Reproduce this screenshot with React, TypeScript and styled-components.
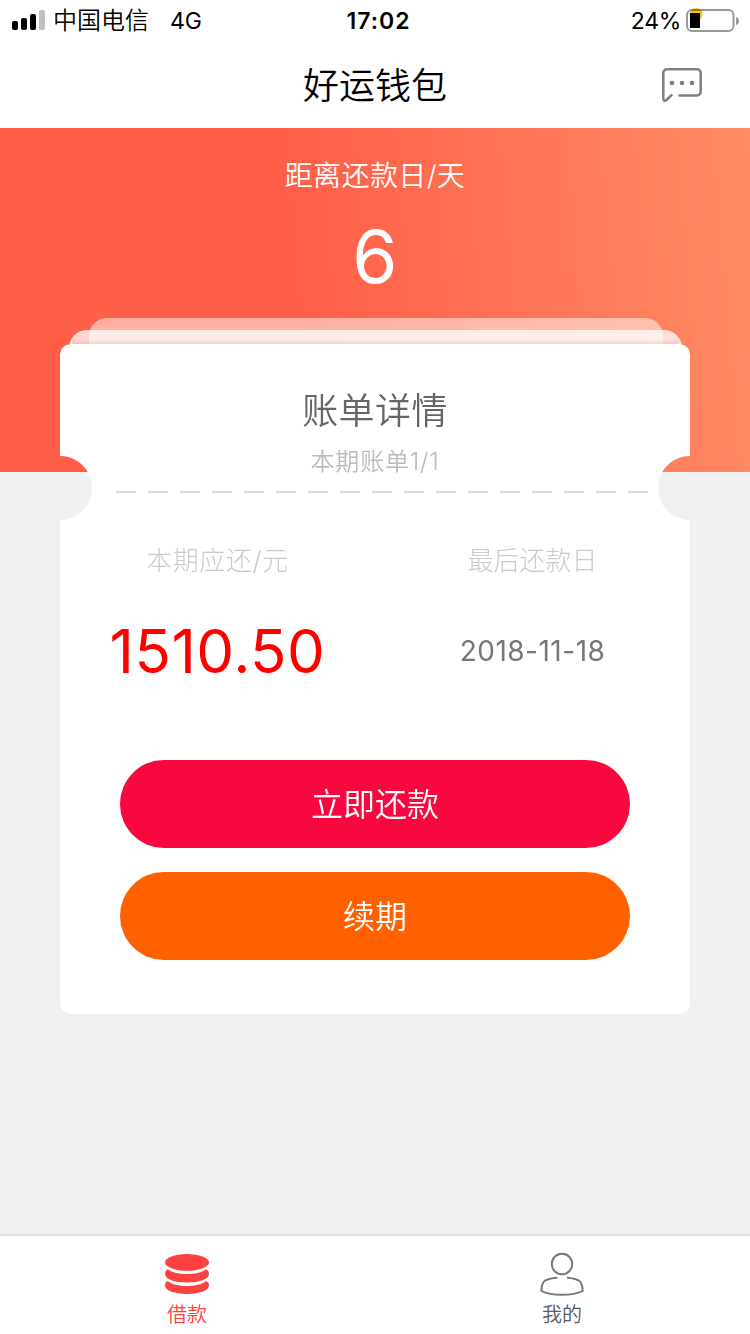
import React from "react";
import styled, { createGlobalStyle } from "styled-components";

const GlobalStyle = createGlobalStyle`
  * { box-sizing: border-box; }
  body {
    margin: 0;
    background: #f0f0f0;
    font-family: Inter, "Noto Sans CJK SC", sans-serif;
    -webkit-font-smoothing: antialiased;
  }
`;

const Screen = styled.div`
  display: flex;
  flex-direction: column;
  width: 750px;
  height: 1334px;
  overflow: hidden;
  background: #f0f0f0;
`;

const StatusBar = styled.header`
  display: grid;
  grid-template-columns: 1fr auto 1fr;
  grid-template-rows: 40px;
  align-items: center;
  height: 40px;
  padding: 0 10px 0 12px;
  background: #fff;
  color: #000;
  font-size: 24px;
  line-height: 36px;
  white-space: nowrap;
`;

const StatusGroup = styled.div<{ $end?: boolean }>`
  display: flex;
  align-items: center;
  justify-content: ${(p) => (p.$end ? "flex-end" : "flex-start")};
  gap: ${(p) => (p.$end ? 5 : 7)}px;
  height: 40px;
`;

const Carrier = styled.span`
  padding-top: 2px;
  font-weight: 350;
`;

const Network = styled.span`
  margin-left: 14px;
  padding-top: 2px;
  font-size: 23px;
`;

const Percent = styled.span`
  padding-top: 2px;
  font-size: 23px;
  letter-spacing: -0.3px;
`;

const Clock = styled.div`
  padding: 2px 0 0 5px;
  font-size: 23px;
  font-weight: 600;
  letter-spacing: 1px;
`;

const NavBar = styled.nav`
  display: grid;
  grid-template-columns: 1fr auto 1fr;
  align-items: center;
  height: 88px;
  padding: 3px 48px 0;
  background: #fff;
`;

const Title = styled.h1`
  grid-column: 2;
  margin: 0;
  padding-top: 2px;
  font-size: 36px;
  font-weight: 350;
  line-height: 83px;
  color: #000;
`;

const MessageButton = styled.button`
  justify-self: end;
  display: flex;
  padding: 0;
  border: 0;
  background: none;
`;

const Hero = styled.section`
  display: flex;
  flex-direction: column;
  align-items: center;
  height: 344px;
  padding-top: 26px;
  background: linear-gradient(85deg, #ff5f48 0%, #ff5f48 40%, #ff8c64 100%);
  color: #fff;
`;

const HeroLabel = styled.div`
  font-size: 28px;
  font-weight: 350;
  line-height: 44px;
  letter-spacing: 0.4px;
`;

const HeroDays = styled.div`
  margin-top: 15px;
  font-size: 73px;
  line-height: 88px;
`;

const Bill = styled.main`
  position: relative;
  z-index: 1;
  flex: 1;
  margin: -154px 60px 0;
`;

const Stack = styled.div`
  position: relative;
  height: 26px;
  overflow: hidden;
  &::after {
    content: "";
    position: absolute;
    left: 12px;
    right: 12px;
    bottom: 0;
    height: 5px;
    background: linear-gradient(rgba(120, 60, 50, 0), rgba(120, 60, 50, 0.12));
  }
`;

const Sheet = styled.div<{ $left: number; $right: number; $top: number; $alpha: number }>`
  position: absolute;
  left: ${(p) => p.$left}px;
  right: ${(p) => p.$right}px;
  top: ${(p) => p.$top}px;
  height: 60px;
  border-radius: 18px;
  background: rgba(255, 255, 255, ${(p) => p.$alpha});
`;

const Card = styled.article`
  height: 670px;
  padding-top: 41px;
  border-radius: 10px;
  background: #fff;
  mask-image: radial-gradient(circle at 0 144px, transparent 31.5px, #000 32.5px),
    radial-gradient(circle at 100% 144px, transparent 31.5px, #000 32.5px);
  mask-composite: intersect;
`;

const CardTitle = styled.h2`
  margin: 0;
  font-size: 36px;
  font-weight: 350;
  line-height: 52px;
  letter-spacing: 0.4px;
  text-align: center;
  color: #666;
`;

const CardSubtitle = styled.div`
  margin-top: 7px;
  font-size: 24px;
  font-weight: 350;
  line-height: 36px;
  letter-spacing: 0.8px;
  text-align: center;
  color: #bbb;
`;

const Divider = styled.div`
  height: 2px;
  margin: 11px 42px 0 56px;
  background: repeating-linear-gradient(90deg, #dcdcdc 0 20px, transparent 20px 32px);
`;

const Columns = styled.div`
  display: grid;
  grid-template-columns: 1fr 1fr;
  margin-top: 48px;
  text-align: center;
`;

const ColumnLabel = styled.div<{ $spacing?: number }>`
  font-size: 26px;
  font-weight: 300;
  line-height: 40px;
  letter-spacing: ${(p) => p.$spacing ?? 0}px;
  color: #cbcbcb;
`;

const ColumnValue = styled.div<{ $amount?: boolean }>`
  margin-top: 30px;
  line-height: 80px;
  font-size: ${(p) => (p.$amount ? 60 : 28)}px;
  letter-spacing: ${(p) => (p.$amount ? 0.5 : 0.5)}px;
  color: ${(p) => (p.$amount ? "#ff0000" : "#777")};
`;

const Actions = styled.div`
  display: flex;
  flex-direction: column;
  gap: 24px;
  margin: 69px 60px 0;
`;

const ActionButton = styled.button<{ $color: string }>`
  height: 88px;
  padding: 2px 0 0;
  border: 0;
  border-radius: 44px;
  background: ${(p) => p.$color};
  color: #fff;
  font-family: inherit;
  font-size: 32px;
  font-weight: 350;
  line-height: 86px;
`;

const TabBar = styled.footer`
  display: grid;
  grid-template-columns: 1fr 1fr;
  height: 100px;
  border-top: 2px solid #e0e0e0;
  background: #fff;
`;

const Tab = styled.div<{ $active?: boolean }>`
  display: flex;
  flex-direction: column;
  align-items: center;
  padding: 16px 1px 0 0;
  font-size: 20px;
  font-weight: 350;
  line-height: 28px;
  color: ${(p) => (p.$active ? "#ff4040" : "#555c61")};
  svg { display: block; margin-bottom: 5px; }
`;

const SignalIcon = () => (
  <svg width="34" height="20" viewBox="0 0 34 20">
    <rect x="0" y="11" width="6" height="9" rx="2" />
    <rect x="9" y="8" width="6" height="12" rx="2" />
    <rect x="18" y="4" width="6" height="16" rx="2" />
    <rect x="27" y="0" width="6" height="20" rx="2" fill="#bfbfbf" />
  </svg>
);

const BatteryIcon = () => (
  <svg width="54" height="26" viewBox="0 0 54 26">
    <circle cx="10" cy="7.3" r="6.3" fill="#ffc20a" />
    <rect x="1" y="3" width="46.5" height="21" rx="5" fill="none" stroke="#000" strokeOpacity="0.4" strokeWidth="2" />
    <rect x="4" y="6" width="10" height="15" fill="#000" />
    <path d="M50 10 Q53 11 53 14 Q53 17 50 18Z" fill="#999" />
  </svg>
);

const MessageIcon = () => (
  <svg width="40" height="36" viewBox="0 0 40 36" fill="none" stroke="#7f7f7f" strokeWidth="2.5" strokeLinecap="round" strokeLinejoin="round">
    <path d="M17.5 27.4H35a3.7 3.7 0 0 0 3.7-3.7V5A3.7 3.7 0 0 0 35 1.3H5A3.7 3.7 0 0 0 1.3 5V30.5Q1.5 34.2 4.5 32L9.5 27.2" />
    <g fill="#7f7f7f" stroke="none">
      <circle cx="10" cy="15" r="2.3" />
      <circle cx="20" cy="15" r="2.3" />
      <circle cx="30" cy="15" r="2.3" />
    </g>
  </svg>
);

const CoinsIcon = () => (
  <svg width="46" height="44" viewBox="0 0 46 44" fill="#ff4040">
    <ellipse cx="23" cy="10.4" rx="22" ry="8.4" />
    <path d="M3.8 17.3C8 20.8 15 22 23 22S38 20.8 42.2 17.3Q45 18.5 45 22C45 27 35 30.5 23 30.5S1 27 1 22Q1 18.5 3.8 17.3Z" />
    <path d="M3.8 29C8 32.6 15 34 23 34S38 32.6 42.2 29Q45 30.3 45 33.6C45 38.8 35 42 23 42S1 38.8 1 33.6Q1 30.3 3.8 29Z" />
  </svg>
);

const PersonIcon = () => (
  <svg width="46" height="44" viewBox="0 0 46 44" fill="none" stroke="#777" strokeWidth="1.9" strokeLinecap="round">
    <circle cx="23" cy="12" r="10.2" />
    <path d="M17.5 25.8Q7 26.8 4.5 30Q2.3 33.5 2.3 39Q10 42.8 23 42.8T43.7 39Q43.7 33.5 41.5 30Q39 26.8 28.8 25.8" />
  </svg>
);

export default function App() {
  return (
    <Screen>
      <GlobalStyle />
      <StatusBar>
        <StatusGroup>
          <SignalIcon />
          <Carrier>中国电信</Carrier>
          <Network>4G</Network>
        </StatusGroup>
        <Clock>17:02</Clock>
        <StatusGroup $end>
          <Percent>24%</Percent>
          <BatteryIcon />
        </StatusGroup>
      </StatusBar>
      <NavBar>
        <Title>好运钱包</Title>
        <MessageButton aria-label="消息">
          <MessageIcon />
        </MessageButton>
      </NavBar>
      <Hero>
        <HeroLabel>距离还款日/天</HeroLabel>
        <HeroDays>6</HeroDays>
      </Hero>
      <Bill>
        <Stack>
          <Sheet $left={29} $right={27} $top={0} $alpha={0.5} />
          <Sheet $left={9} $right={8.5} $top={12} $alpha={0.75} />
        </Stack>
        <Card>
          <CardTitle>账单详情</CardTitle>
          <CardSubtitle>本期账单1/1</CardSubtitle>
          <Divider />
          <Columns>
            <div>
              <ColumnLabel $spacing={0.6}>本期应还/元</ColumnLabel>
              <ColumnValue $amount>1510.50</ColumnValue>
            </div>
            <div>
              <ColumnLabel>最后还款日</ColumnLabel>
              <ColumnValue>2018-11-18</ColumnValue>
            </div>
          </Columns>
          <Actions>
            <ActionButton $color="#f9073f">立即还款</ActionButton>
            <ActionButton $color="#ff6000">续期</ActionButton>
          </Actions>
        </Card>
      </Bill>
      <TabBar>
        <Tab $active>
          <CoinsIcon />
          借款
        </Tab>
        <Tab>
          <PersonIcon />
          我的
        </Tab>
      </TabBar>
    </Screen>
  );
}
